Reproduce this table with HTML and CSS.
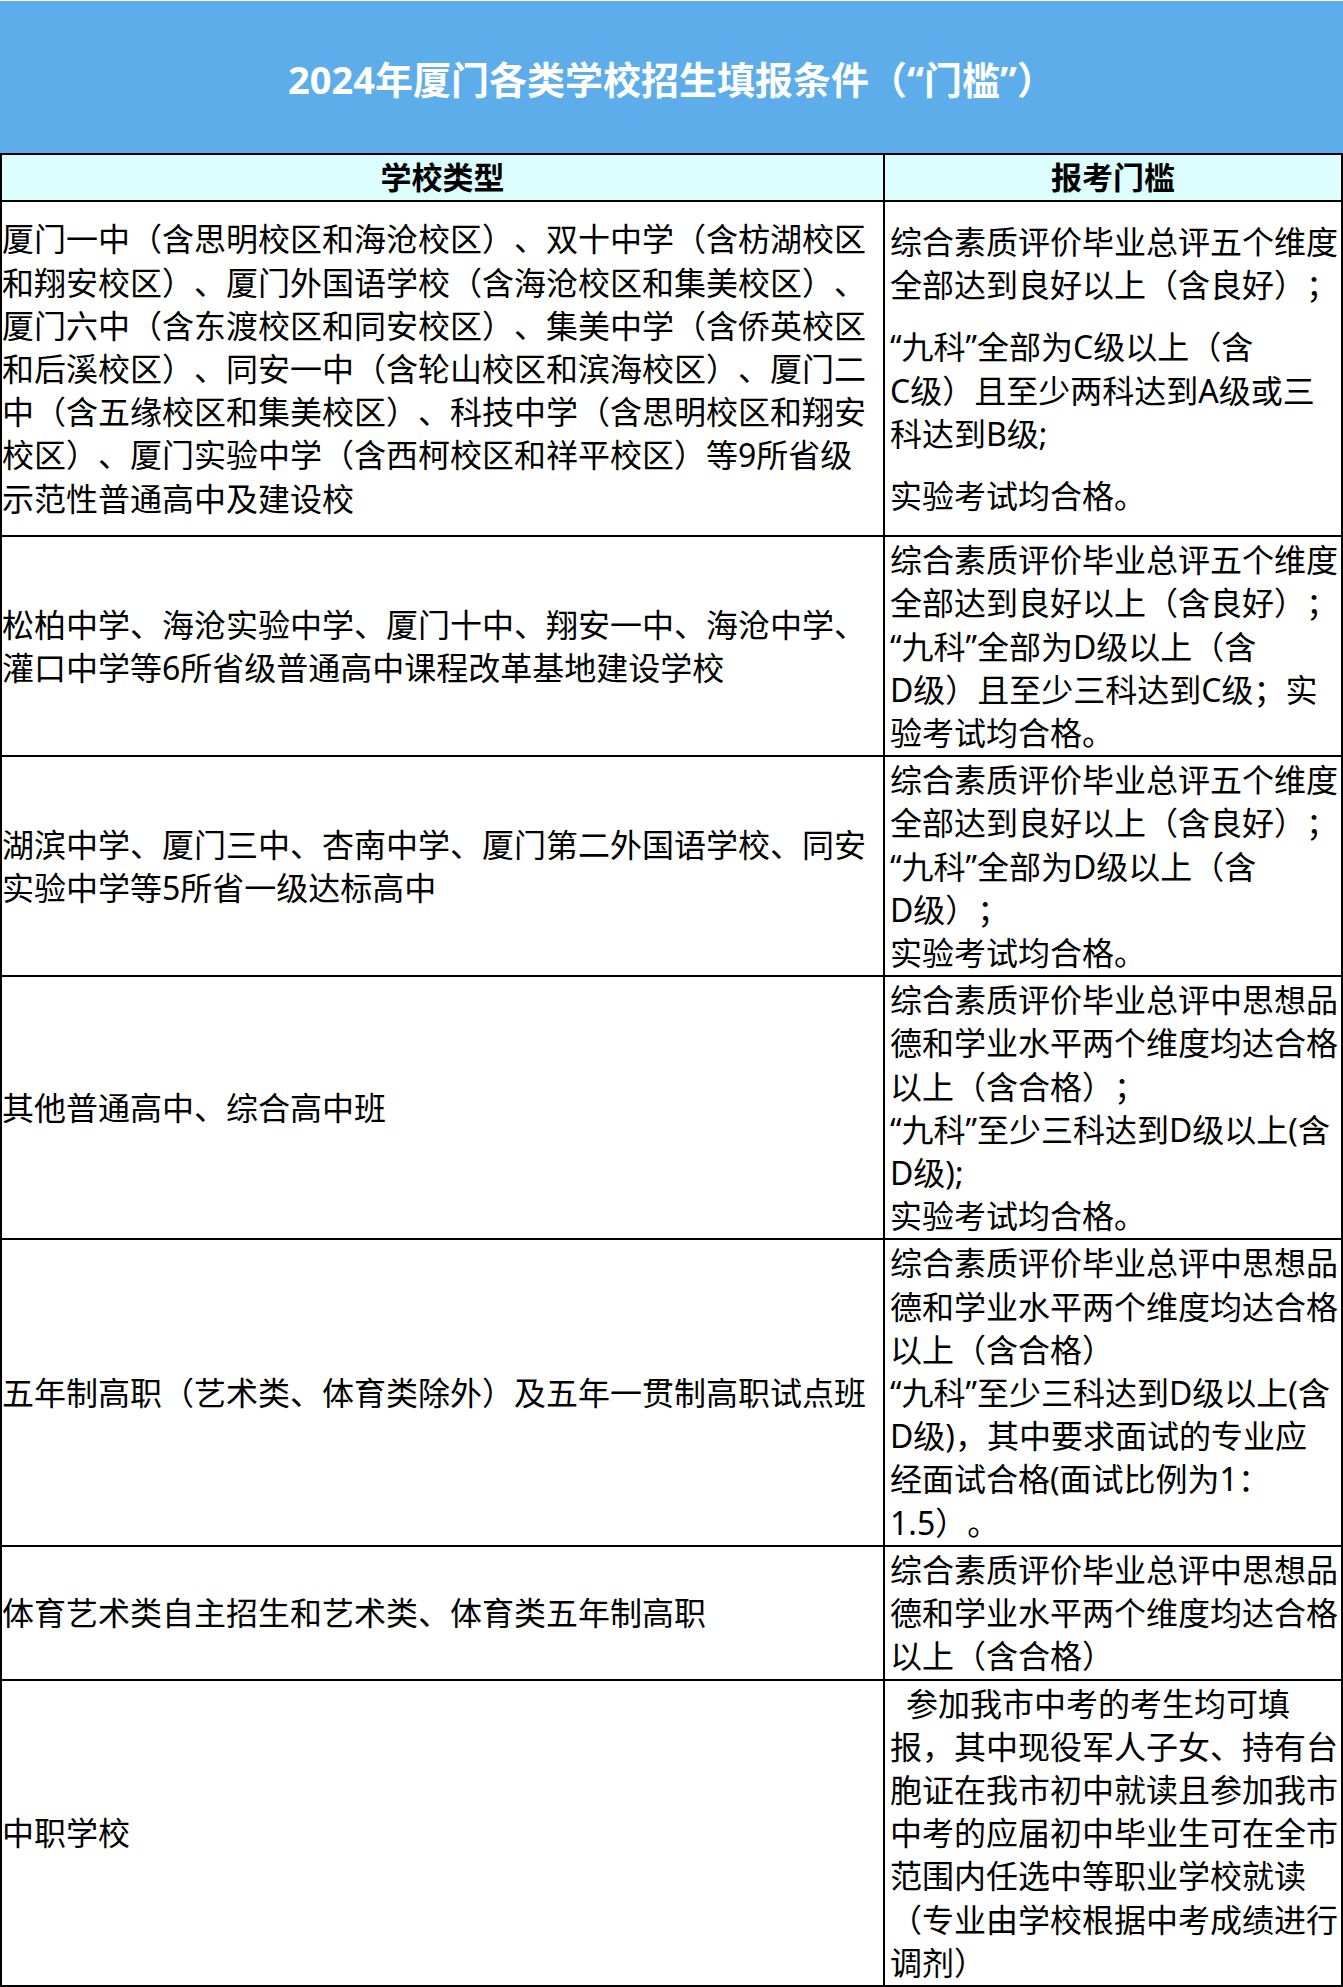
FILE: index.html
```html
<!DOCTYPE html>
<html lang="zh-CN">
<head>
<meta charset="utf-8">
<title>2024年厦门各类学校招生填报条件</title>
<link rel="stylesheet" href="styles.css">
</head>
<body>
<div class="page">
  <header class="title-bar">
    <h1 class="title">2024年厦门各类学校招生填报条件（“门槛”）</h1>
  </header>
  <table class="grid">
    <colgroup><col class="col-type"><col class="col-req"></colgroup>
    <thead>
      <tr><th>学校类型</th><th>报考门槛</th></tr>
    </thead>
    <tbody>
      <tr>
        <td class="type">厦门一中（含思明校区和海沧校区）、双十中学（含枋湖校区<br>和翔安校区）、厦门外国语学校（含海沧校区和集美校区）、<br>厦门六中（含东渡校区和同安校区）、集美中学（含侨英校区<br>和后溪校区）、同安一中（含轮山校区和滨海校区）、厦门二<br>中（含五缘校区和集美校区）、科技中学（含思明校区和翔安<br>校区）、厦门实验中学（含西柯校区和祥平校区）等9所省级<br>示范性普通高中及建设校</td>
        <td class="req req-spaced">
          <p>综合素质评价毕业总评五个维度<br>全部达到良好以上（含良好）；</p>
          <p>“九科”全部为C级以上（含<br>C级）且至少两科达到A级或三<br>科达到B级;</p>
          <p>实验考试均合格。</p>
        </td>
      </tr>
      <tr>
        <td class="type">松柏中学、海沧实验中学、厦门十中、翔安一中、海沧中学、<br>灌口中学等6所省级普通高中课程改革基地建设学校</td>
        <td class="req">综合素质评价毕业总评五个维度<br>全部达到良好以上（含良好）；<br>“九科”全部为D级以上（含<br>D级）且至少三科达到C级；实<br>验考试均合格。</td>
      </tr>
      <tr>
        <td class="type">湖滨中学、厦门三中、杏南中学、厦门第二外国语学校、同安<br>实验中学等5所省一级达标高中</td>
        <td class="req">综合素质评价毕业总评五个维度<br>全部达到良好以上（含良好）；<br>“九科”全部为D级以上（含<br>D级）；<br>实验考试均合格。</td>
      </tr>
      <tr>
        <td class="type">其他普通高中、综合高中班</td>
        <td class="req">综合素质评价毕业总评中思想品<br>德和学业水平两个维度均达合格<br>以上（含合格）；<br>“九科”至少三科达到D级以上(含<br>D级);<br>实验考试均合格。</td>
      </tr>
      <tr>
        <td class="type">五年制高职（艺术类、体育类除外）及五年一贯制高职试点班</td>
        <td class="req">综合素质评价毕业总评中思想品<br>德和学业水平两个维度均达合格<br>以上（含合格）<br>“九科”至少三科达到D级以上(含<br>D级)，其中要求面试的专业应<br>经面试合格(面试比例为1：<br>1.5）。</td>
      </tr>
      <tr>
        <td class="type">体育艺术类自主招生和艺术类、体育类五年制高职</td>
        <td class="req">综合素质评价毕业总评中思想品<br>德和学业水平两个维度均达合格<br>以上（含合格）</td>
      </tr>
      <tr>
        <td class="type">中职学校</td>
        <td class="req">&ensp;参加我市中考的考生均可填<br>报，其中现役军人子女、持有台<br>胞证在我市初中就读且参加我市<br>中考的应届初中毕业生可在全市<br>范围内任选中等职业学校就读<br>（专业由学校根据中考成绩进行<br>调剂）</td>
      </tr>
    </tbody>
  </table>
</div>
</body>
</html>
```

FILE: styles.css
```css
* {
  box-sizing: border-box;
}

html,
body {
  margin: 0;
  padding: 0;
  background: #ffffff;
}

body {
  font-family: "Noto Sans", "Noto Sans CJK SC", sans-serif;
  color: #000000;
  text-spacing-trim: space-all;
}

.page {
  width: 1343px;
}

.title-bar {
  height: 153px;
  background: #5eadeb;
  border-top: 1px solid #ffffff;
  display: flex;
  align-items: center;
  justify-content: center;
}

.title {
  margin: 0;
  padding-top: 6px;
  font-size: 38px;
  font-weight: 700;
  color: #ffffff;
  line-height: 1.2;
}

.grid {
  width: 1343px;
  border-collapse: collapse;
  table-layout: fixed;
}

.col-type {
  width: 883px;
}

.grid th,
.grid td {
  border: 2px solid #000000;
  padding: 0;
}

.grid th {
  background: #dcfeff;
  height: 47px;
  font-size: 31px;
  font-weight: 700;
  line-height: 43px;
  text-align: center;
}

.type {
  font-size: 32px;
  line-height: 43.2px;
  padding: 0 0 0 6px;
  vertical-align: middle;
  white-space: nowrap;
}

.grid .req {
  font-size: 32px;
  line-height: 43.2px;
  padding: 1px 0 1px 5px;
  vertical-align: middle;
  white-space: nowrap;
}

.grid .req-spaced {
  padding: 18px 0 18px 5px;
}

.req p {
  margin: 0;
}

.req p + p {
  margin-top: 19px;
}
```
